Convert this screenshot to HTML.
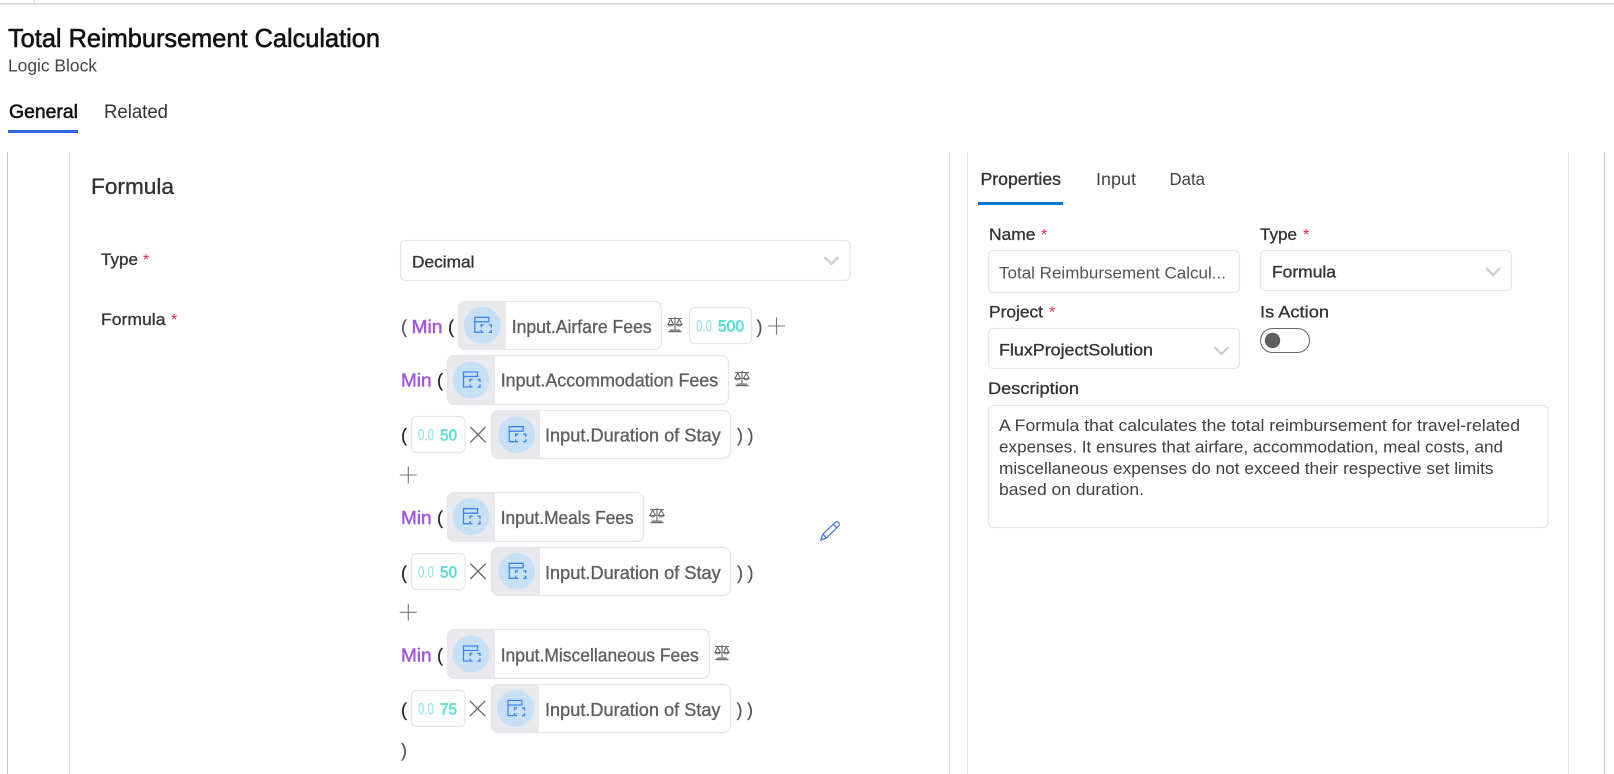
<!DOCTYPE html>
<html lang="en">
<head>
<meta charset="utf-8">
<title>Total Reimbursement Calculation</title>
<style>
html,body{margin:0;padding:0;background:#fff;width:1614px;height:774px;overflow:hidden}
svg{display:block}
text{font-family:"Liberation Sans",sans-serif;white-space:pre}
.pill{font-size:18px;fill:#5f5f5f;stroke:#5f5f5f;stroke-width:.35}
.lab{font-size:17px;fill:#333;stroke:#333;stroke-width:.3}
.ast{font-size:16px;fill:#f0244a}
.sel{font-size:17px;fill:#333;stroke:#333;stroke-width:.35}
.par{font-size:18px;fill:#555;stroke:#555;stroke-width:.2}
.min{font-size:18px;fill:#a354e0;stroke:#a354e0;stroke-width:.45}
.z{font-size:16.5px;fill:#8ae3dd}
.v{font-size:16px;fill:#5fdcd5;stroke:#5fdcd5;stroke-width:.7}
.d{font-size:16.500px;fill:#404040}
.tab{font-size:17.500px;fill:#444}
.b{fill:#fff;stroke:#e6e6e6;stroke-width:1.2}
</style>
</head>
<body>
<svg xmlns="http://www.w3.org/2000/svg" width="1614" height="774" viewBox="0 0 1614 774">
<defs>
<g id="ic">
<circle r="18.5" fill="#c8e0f6"/>
<path d="M-2 7H-7.500V-8H6.500V-3M-7.500-3.500H6.500" fill="none" stroke="#3b86f5" stroke-width="1.300"/>
<path d="M1.500-.5H-1V2M6.500-.5H9V2M-1 4.500V7H1.500M9 4.500V7H6.500" fill="none" stroke="#3b86f5" stroke-width="1.400"/>
</g>
<g id="sc" fill="none" stroke="#6a6a6a" stroke-width="1.1">
<path d="M1 1.500H15M8 0V12.500M3 13H13"/>
<path d="M3.700 2L1 7.500M3.700 2L6.500 7.500M1 7.500Q3.700 10.500 6.500 7.500ZM12.300 2L9.500 7.500M12.300 2L15 7.500M9.500 7.500Q12.300 10.500 15 7.500Z"/>
<path d="M1.500 14.500H14.500" stroke-width="1.500"/>
</g>
<path id="pl" d="M-8.500 0H8.500M0-8.500V8.500" stroke="#777" stroke-width="1.100" fill="none"/>
<path id="xx" d="M-7.700-7.700L7.700 7.700M7.700-7.700L-7.700 7.700" stroke="#666" stroke-width="1.300" fill="none"/>
<path id="ch" d="M-7-4L0 3L7-4" stroke="#ccc" stroke-width="2.200" fill="none"/>
</defs>

<!-- top chrome -->
<rect x="0" y="3" width="1614" height="1.600" fill="#d6d6d6"/>
<rect x="34" y="0" width="1" height="3" fill="#d6d6d6"/>

<!-- header -->
<text x="8" y="47" font-size="26" fill="#111" stroke="#111" stroke-width=".6" textLength="372" lengthAdjust="spacingAndGlyphs">Total Reimbursement Calculation</text>
<text x="8" y="71.500" font-size="17.500" fill="#444" textLength="89" lengthAdjust="spacingAndGlyphs">Logic Block</text>
<text x="9" y="118" font-size="19" fill="#111" stroke="#111" stroke-width=".5" textLength="69" lengthAdjust="spacingAndGlyphs">General</text>
<text x="104" y="118" font-size="19" fill="#333" textLength="64" lengthAdjust="spacingAndGlyphs">Related</text>
<rect x="8" y="130" width="70" height="3" fill="#2a67e0"/>

<!-- panel lines -->
<rect x="7" y="152" width="1" height="622" fill="#c9c9c9"/>
<rect x="69" y="152" width="1" height="622" fill="#e6e6e6"/>
<rect x="949" y="152" width="1" height="622" fill="#e6e6e6"/>
<rect x="967" y="152" width="1" height="622" fill="#e6e6e6"/>
<rect x="1568" y="152" width="1" height="622" fill="#e6e6e6"/>
<rect x="1604" y="152" width="1" height="622" fill="#c9c9c9"/>

<!-- left form -->
<text x="91" y="194" font-size="22" fill="#333" stroke="#333" stroke-width=".35" textLength="83" lengthAdjust="spacingAndGlyphs">Formula</text>
<text class="lab" x="101" y="265" textLength="37" lengthAdjust="spacingAndGlyphs">Type</text>
<text class="ast" x="143" y="265">*</text>
<text class="lab" x="101" y="325" textLength="64.500" lengthAdjust="spacingAndGlyphs">Formula</text>
<text class="ast" x="171" y="325">*</text>

<rect class="b" x="400.500" y="240.500" width="449.500" height="40" rx="5"/>
<text class="sel" x="412" y="267.700" textLength="62.500" lengthAdjust="spacingAndGlyphs">Decimal</text>
<use href="#ch" x="831.500" y="261"/>

<!-- row 1 -->
<text class="par" x="401" y="333">(</text>
<text class="min" x="411.500" y="333" textLength="31" lengthAdjust="spacingAndGlyphs">Min</text>
<text class="par" x="448" y="333" style="fill:#222;stroke:#222">(</text>
<path d="M506 301.500H464a6 6 0 0 0-6 6V343a6 6 0 0 0 6 6H506Z" fill="#e8e9ed"/>
<rect x="458.500" y="301.500" width="203" height="48" rx="7" fill="none" stroke="#e6e6e6" stroke-width="1.200"/>
<use href="#ic" x="482.300" y="325.300"/>
<text class="pill" x="511.700" y="333" textLength="140" lengthAdjust="spacingAndGlyphs">Input.Airfare Fees</text>
<use href="#sc" x="667" y="317"/>
<rect class="b" x="689.500" y="307.500" width="62" height="36" rx="5"/>
<text class="z" x="696" y="331.700" textLength="16" lengthAdjust="spacingAndGlyphs">0.0</text>
<text class="v" x="718" y="331.700" textLength="26" lengthAdjust="spacingAndGlyphs">500</text>
<text class="par" x="756.500" y="333">)</text>
<use href="#pl" x="776.500" y="326"/>

<!-- row 2 -->
<text class="min" x="401" y="386.700" textLength="30.500" lengthAdjust="spacingAndGlyphs">Min</text>
<text class="par" x="437" y="386.700" style="fill:#222;stroke:#222">(</text>
<path d="M495 355.500H453a6 6 0 0 0-6 6V398a6 6 0 0 0 6 6H495Z" fill="#e8e9ed"/>
<rect x="447.500" y="355.500" width="281" height="49" rx="7" fill="none" stroke="#e6e6e6" stroke-width="1.200"/>
<use href="#ic" x="471" y="380"/>
<text class="pill" x="500.700" y="386.700" textLength="217.500" lengthAdjust="spacingAndGlyphs">Input.Accommodation Fees</text>
<use href="#sc" x="734" y="371"/>

<!-- row 3 -->
<text class="par" x="401" y="441.700" style="fill:#222;stroke:#222">(</text>
<rect class="b" x="411.500" y="416.500" width="53.500" height="36" rx="5"/>
<text class="z" x="418" y="440.500" textLength="16" lengthAdjust="spacingAndGlyphs">0.0</text>
<text class="v" x="440" y="440.500" textLength="17" lengthAdjust="spacingAndGlyphs">50</text>
<use href="#xx" x="478" y="434.700"/>
<path d="M540 410.500H497a6 6 0 0 0-6 6V452a6 6 0 0 0 6 6H540Z" fill="#e8e9ed"/>
<rect x="491.500" y="410.500" width="239" height="48" rx="7" fill="none" stroke="#e6e6e6" stroke-width="1.200"/>
<use href="#ic" x="516.700" y="434.700"/>
<text class="pill" x="545" y="441.700" textLength="175.700" lengthAdjust="spacingAndGlyphs">Input.Duration of Stay</text>
<text class="par" x="737" y="441.700">)</text>
<text class="par" x="747.500" y="441.700">)</text>

<use href="#pl" x="408.300" y="475"/>

<!-- row 4 -->
<text class="min" x="401" y="524" textLength="30.500" lengthAdjust="spacingAndGlyphs">Min</text>
<text class="par" x="437" y="524" style="fill:#222;stroke:#222">(</text>
<path d="M495 492.500H453a6 6 0 0 0-6 6V535a6 6 0 0 0 6 6H495Z" fill="#e8e9ed"/>
<rect x="447.500" y="492.500" width="196" height="49" rx="7" fill="none" stroke="#e6e6e6" stroke-width="1.200"/>
<use href="#ic" x="471" y="516.700"/>
<text class="pill" x="500.700" y="524" textLength="133" lengthAdjust="spacingAndGlyphs">Input.Meals Fees</text>
<use href="#sc" x="649" y="508"/>

<!-- pencil -->
<g fill="none" stroke="#3a74d8" stroke-width="1.200">
<path d="M820.800 540L823 534L835 522.500Q837 521 838.600 522.500Q840 524.200 838.600 526L826.500 538Z"/>
<path d="M823 534L826.500 538M833.300 524.300L837 527.800"/>
</g>

<!-- row 5 -->
<text class="par" x="401" y="579" style="fill:#222;stroke:#222">(</text>
<rect class="b" x="411.500" y="553.500" width="53.500" height="36" rx="5"/>
<text class="z" x="418" y="577.500" textLength="16" lengthAdjust="spacingAndGlyphs">0.0</text>
<text class="v" x="440" y="577.500" textLength="17" lengthAdjust="spacingAndGlyphs">50</text>
<use href="#xx" x="478" y="571.300"/>
<path d="M540 547.500H497a6 6 0 0 0-6 6V589a6 6 0 0 0 6 6H540Z" fill="#e8e9ed"/>
<rect x="491.500" y="547.500" width="239" height="48" rx="7" fill="none" stroke="#e6e6e6" stroke-width="1.200"/>
<use href="#ic" x="516.700" y="571.300"/>
<text class="pill" x="545" y="579" textLength="175.700" lengthAdjust="spacingAndGlyphs">Input.Duration of Stay</text>
<text class="par" x="737" y="579">)</text>
<text class="par" x="747.500" y="579">)</text>

<use href="#pl" x="408.300" y="612.300"/>

<!-- row 6 -->
<text class="min" x="401" y="661.300" textLength="30.500" lengthAdjust="spacingAndGlyphs">Min</text>
<text class="par" x="437" y="661.300" style="fill:#222;stroke:#222">(</text>
<path d="M495 629.500H453a6 6 0 0 0-6 6V672a6 6 0 0 0 6 6H495Z" fill="#e8e9ed"/>
<rect x="447.500" y="629.500" width="262" height="49" rx="7" fill="none" stroke="#e6e6e6" stroke-width="1.200"/>
<use href="#ic" x="471" y="654"/>
<text class="pill" x="500.700" y="661.300" textLength="198" lengthAdjust="spacingAndGlyphs">Input.Miscellaneous Fees</text>
<use href="#sc" x="714" y="645"/>

<!-- row 7 -->
<text class="par" x="401" y="716" style="fill:#222;stroke:#222">(</text>
<rect class="b" x="411.500" y="690.500" width="53.500" height="36" rx="5"/>
<text class="z" x="418" y="714.500" textLength="16" lengthAdjust="spacingAndGlyphs">0.0</text>
<text class="v" x="440" y="714.500" textLength="17" lengthAdjust="spacingAndGlyphs">75</text>
<use href="#xx" x="477.500" y="708.500"/>
<path d="M539 684.500H497a6 6 0 0 0-6 6V726a6 6 0 0 0 6 6H539Z" fill="#e8e9ed"/>
<rect x="491.500" y="684.500" width="239" height="48" rx="7" fill="none" stroke="#e6e6e6" stroke-width="1.200"/>
<use href="#ic" x="515.500" y="708.500"/>
<text class="pill" x="545" y="716" textLength="175.500" lengthAdjust="spacingAndGlyphs">Input.Duration of Stay</text>
<text class="par" x="736.500" y="716">)</text>
<text class="par" x="747" y="716">)</text>

<text class="par" x="401" y="756.700">)</text>

<!-- right tabs -->
<text class="tab" x="980.500" y="185" style="fill:#333;stroke:#333;stroke-width:.35" textLength="80.500" lengthAdjust="spacingAndGlyphs">Properties</text>
<text class="tab" x="1096" y="185" textLength="40" lengthAdjust="spacingAndGlyphs">Input</text>
<text class="tab" x="1169.500" y="185" textLength="35.500" lengthAdjust="spacingAndGlyphs">Data</text>
<rect x="978" y="202" width="85" height="3" fill="#0078d4"/>

<!-- right form -->
<text class="lab" x="989" y="240" textLength="46.500" lengthAdjust="spacingAndGlyphs">Name</text>
<text class="ast" x="1041" y="240">*</text>
<rect class="b" x="988.500" y="250.500" width="251" height="42" rx="5"/>
<text x="999" y="278.500" font-size="17" fill="#555" textLength="227" lengthAdjust="spacingAndGlyphs">Total Reimbursement Calcul...</text>

<text class="lab" x="1260" y="240" textLength="37" lengthAdjust="spacingAndGlyphs">Type</text>
<text class="ast" x="1303" y="240">*</text>
<rect class="b" x="1260.500" y="250.500" width="251" height="40" rx="5"/>
<text class="sel" x="1272" y="277.700" textLength="64" lengthAdjust="spacingAndGlyphs">Formula</text>
<use href="#ch" x="1493" y="272"/>

<text class="lab" x="989" y="317.700" textLength="54" lengthAdjust="spacingAndGlyphs">Project</text>
<text class="ast" x="1049" y="317.700">*</text>
<rect class="b" x="988.500" y="328.500" width="251" height="40" rx="5"/>
<text class="sel" x="999" y="355.700" textLength="154" lengthAdjust="spacingAndGlyphs">FluxProjectSolution</text>
<use href="#ch" x="1221.500" y="351"/>

<text class="lab" x="1260" y="317.700" textLength="69" lengthAdjust="spacingAndGlyphs">Is Action</text>
<rect x="1260.500" y="328.500" width="49" height="24" rx="12" fill="#fff" stroke="#666" stroke-width="1"/>
<circle cx="1272.500" cy="340.400" r="7.700" fill="#5f5f5f"/>

<text class="lab" x="988" y="394" textLength="91" lengthAdjust="spacingAndGlyphs">Description</text>
<rect class="b" x="988.500" y="405.500" width="559.500" height="122" rx="5"/>
<text class="d" x="999" y="431" textLength="521" lengthAdjust="spacingAndGlyphs">A Formula that calculates the total reimbursement for travel-related</text>
<text class="d" x="999" y="452.300" textLength="504" lengthAdjust="spacingAndGlyphs">expenses. It ensures that airfare, accommodation, meal costs, and</text>
<text class="d" x="999" y="474" textLength="494.500" lengthAdjust="spacingAndGlyphs">miscellaneous expenses do not exceed their respective set limits</text>
<text class="d" x="999" y="495" textLength="145" lengthAdjust="spacingAndGlyphs">based on duration.</text>
</svg>
</body>
</html>
